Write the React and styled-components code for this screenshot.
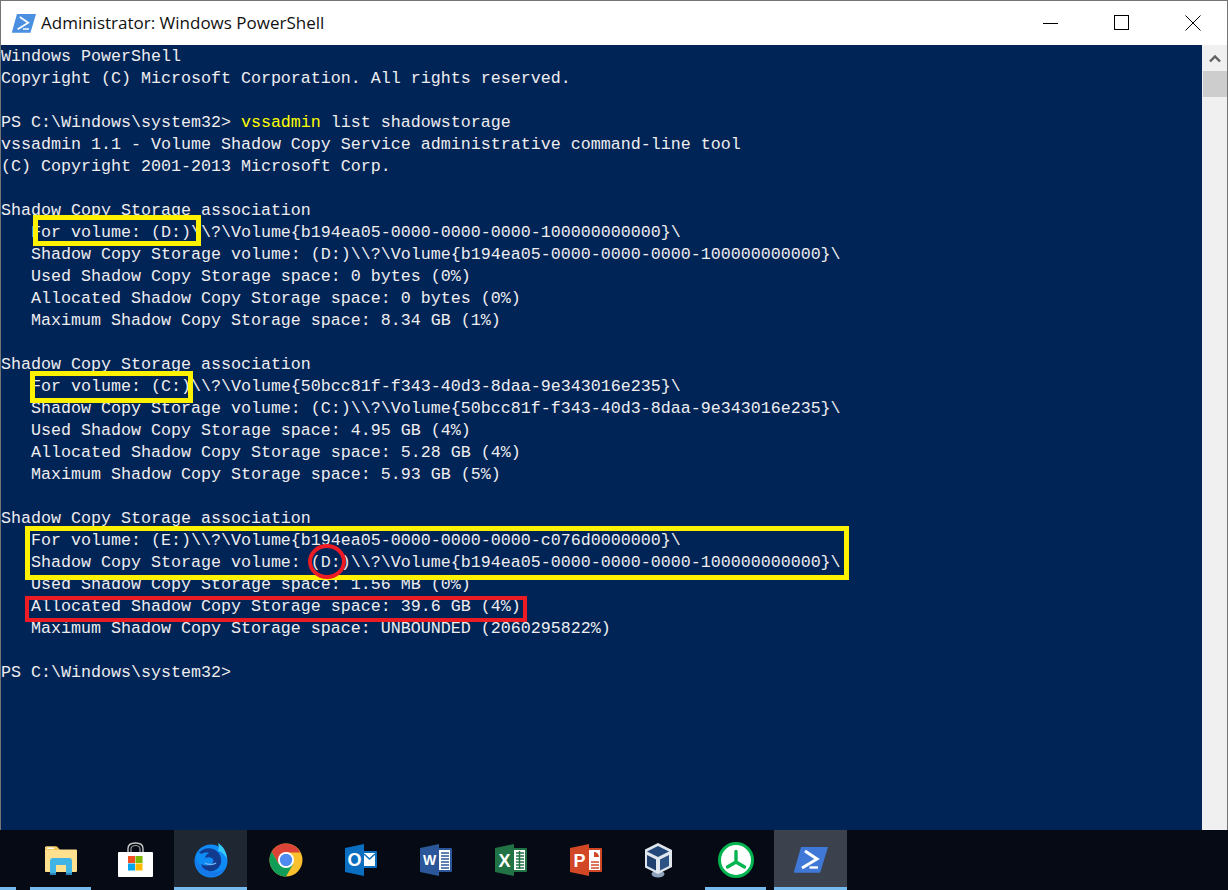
import React from 'react';
import styled, { createGlobalStyle } from 'styled-components';

const GlobalStyle = createGlobalStyle`
  html, body {
    margin: 0;
    padding: 0;
    background: #050a14;
  }
`;

const lines = [
  'Windows PowerShell',
  'Copyright (C) Microsoft Corporation. All rights reserved.',
  '',
  { prompt: 'PS C:\\Windows\\system32> ', cmd: 'vssadmin', rest: ' list shadowstorage' },
  'vssadmin 1.1 - Volume Shadow Copy Service administrative command-line tool',
  '(C) Copyright 2001-2013 Microsoft Corp.',
  '',
  'Shadow Copy Storage association',
  '   For volume: (D:)\\\\?\\Volume{b194ea05-0000-0000-0000-100000000000}\\',
  '   Shadow Copy Storage volume: (D:)\\\\?\\Volume{b194ea05-0000-0000-0000-100000000000}\\',
  '   Used Shadow Copy Storage space: 0 bytes (0%)',
  '   Allocated Shadow Copy Storage space: 0 bytes (0%)',
  '   Maximum Shadow Copy Storage space: 8.34 GB (1%)',
  '',
  'Shadow Copy Storage association',
  '   For volume: (C:)\\\\?\\Volume{50bcc81f-f343-40d3-8daa-9e343016e235}\\',
  '   Shadow Copy Storage volume: (C:)\\\\?\\Volume{50bcc81f-f343-40d3-8daa-9e343016e235}\\',
  '   Used Shadow Copy Storage space: 4.95 GB (4%)',
  '   Allocated Shadow Copy Storage space: 5.28 GB (4%)',
  '   Maximum Shadow Copy Storage space: 5.93 GB (5%)',
  '',
  'Shadow Copy Storage association',
  '   For volume: (E:)\\\\?\\Volume{b194ea05-0000-0000-0000-c076d0000000}\\',
  '   Shadow Copy Storage volume: (D:)\\\\?\\Volume{b194ea05-0000-0000-0000-100000000000}\\',
  '   Used Shadow Copy Storage space: 1.56 MB (0%)',
  '   Allocated Shadow Copy Storage space: 39.6 GB (4%)',
  '   Maximum Shadow Copy Storage space: UNBOUNDED (2060295822%)',
  '',
  'PS C:\\Windows\\system32>',
];

const marks = [
  { color: '#fff200', line: 5, x: 33, y: 170, w: 168, h: 31 },
  { color: '#fff200', line: 5, x: 30, y: 326, w: 163, h: 32 },
  { color: '#fff200', line: 5, x: 25, y: 481, w: 824, h: 54 },
  { color: '#ed1c24', line: 4, x: 25, y: 551, w: 502, h: 26 },
];

const Page = styled.div`
  width: 1228px;
  height: 890px;
  display: flex;
  flex-direction: column;
  overflow: hidden;
`;

const Window = styled.div`
  flex: 1;
  display: flex;
  flex-direction: column;
  min-height: 0;
  border: 1px solid #747474;
  border-bottom: 0;
`;

const TitleBar = styled.div`
  height: 44px;
  flex: none;
  display: flex;
  align-items: center;
  background: #fff;
`;

const TitleIcon = styled.svg`
  width: 24px;
  height: 19px;
  margin-left: 11px;
`;

const TitleText = styled.div`
  margin-left: 5px;
  font: 17px/20px "Open Sans", "Noto Sans", sans-serif;
  color: #111;
  flex: 1;
`;

const WinButton = styled.div`
  width: 71px;
  height: 44px;
  display: flex;
  align-items: center;
  justify-content: center;
`;

const WinButtons = styled.div`
  display: flex;
  margin-right: -1px;
`;

const Body = styled.div`
  flex: 1;
  display: flex;
  min-height: 0;
`;

const Console = styled.div`
  flex: 1;
  position: relative;
  padding-top: 1px;
  background: #012456;
  overflow: hidden;
`;

const Line = styled.div`
  height: 22px;
  font: 16.67px/22px "Liberation Mono", monospace;
  color: #eeedf0;
  white-space: pre;
`;

const Command = styled.span`
  color: #ffff00;
`;

const Mark = styled.div`
  position: absolute;
  box-sizing: border-box;
  border: ${(p) => p.$line}px solid ${(p) => p.$color};
`;

const Ring = styled.div`
  position: absolute;
  left: 307px;
  top: 499px;
  width: 38px;
  height: 35px;
  box-sizing: border-box;
  border: 4px solid #ed1c24;
  border-radius: 50%;
`;

const Scrollbar = styled.div`
  width: 25px;
  flex: none;
  background: #f0f0f0;
  display: flex;
  flex-direction: column;
  align-items: center;
`;

const ScrollArrow = styled.div`
  height: 26px;
  display: flex;
  align-items: center;
  justify-content: center;
  align-self: stretch;
`;

const ScrollThumb = styled.div`
  height: 26px;
  align-self: stretch;
  margin-left: 1px;
  background: #cdcdcd;
`;

const Taskbar = styled.div`
  height: 60px;
  flex: none;
  display: flex;
  gap: 2px;
  background: #050a14;
`;

const StartStub = styled.div`
  width: 16px;
  margin-right: 6px;
  position: relative;
`;

const Tile = styled.div`
  width: 73px;
  height: 60px;
  position: relative;
  display: flex;
  align-items: center;
  justify-content: center;
  background: ${(p) => p.$bg || 'transparent'};
`;

const Underline = styled.div`
  position: absolute;
  bottom: 0;
  height: 3px;
  background: #76b9ed;
  left: ${(p) => (p.$full ? 0 : '6px')};
  right: ${(p) => (p.$full ? 0 : '6px')};
`;

const Letter = styled.text`
  font-family: "Liberation Sans", sans-serif;
  font-weight: 700;
  fill: #fff;
  text-anchor: middle;
`;

const Explorer = () => (
  <svg width="32" height="32" viewBox="0 0 32 32">
    <path d="M0 3.500a1 1 0 0 1 1-1h10l3 3h17a1 1 0 0 1 1 1V27a1 1 0 0 1-1 1H1a1 1 0 0 1-1-1z" fill="#fee08e" />
    <path d="M1 2.500h11l3 3.500H0z" fill="#f3c95f" />
    <rect x="2" y="3.500" width="7" height="1.500" fill="#fff" />
    <path d="M5 31V17a3 3 0 0 1 3-3h16a3 3 0 0 1 3 3v14h-6V21H11v10z" fill="#41b4e6" />
    <rect x="5" y="29" width="6" height="2" fill="#2a86bb" />
    <rect x="21" y="29" width="6" height="2" fill="#2a86bb" />
  </svg>
);

const Store = () => (
  <svg width="36" height="36" viewBox="1 0 36 36">
    <path d="M11 11V6.500C11 3 14 1 18.500 1S26 3 26 6.500V11" fill="none" stroke="#c8c8c8" strokeWidth="1.400" />
    <path d="M14 11V7c0-2 2-3.500 4.500-3.500S23 5 23 7v4" fill="none" stroke="#9a9a9a" strokeWidth="1.200" />
    <rect x="1" y="10" width="35" height="25" rx="1" fill="#fff" />
    <rect x="11" y="14" width="7" height="7" fill="#f25022" />
    <rect x="18.500" y="14" width="7" height="7" fill="#7fba00" />
    <rect x="11" y="21.500" width="7" height="7" fill="#00a4ef" />
    <rect x="18.500" y="21.500" width="7" height="7" fill="#ffb900" />
  </svg>
);

const Firefox = () => (
  <svg width="36" height="36" viewBox="0 0 36 36">
    <circle cx="18" cy="19" r="16.500" fill="#0f8bf5" />
    <path d="M25 1c5 3 9 9 9 16-2-4-5-7-9-8 1-3 1-5 0-8z" fill="#35c9f7" />
    <path d="M4 5l2 6c3-4 9-6 14-4 6 2 9 8 8 14-2 6-7 9-12 8-4-1-7-3-8-7 4 2 8 2 10 0 2-1 3-3 2-5-2-2-6-2-8-1 0-2 2-4 4-5-3-1-6 0-8 1-2-2-3-4-4-7z" fill="#123a8f" />
    <path d="M2 15c-1 8 4 17 12 19 8 2 15-2 18-8-5 4-11 5-17 3C9 27 4 22 2 15z" fill="#1578e8" />
    <path d="M12 21c3 2 8 2 11 0" fill="none" stroke="#6fb5f5" strokeWidth="1.500" />
  </svg>
);

const Chrome = () => (
  <svg width="34" height="34" viewBox="0 0 34 34">
    <circle cx="17" cy="17" r="16.500" fill="#fbc02d" />
    <path d="M17 .5A16.500 16.500 0 0 0 2.700 8.800L9.800 21 17 9.500h14.300A16.500 16.500 0 0 0 17 .5z" fill="#db4437" />
    <path d="M2.700 8.800A16.500 16.500 0 0 0 17 33.500l7.200-12.400L17 24 9.800 21z" fill="#0f9d58" />
    <circle cx="17" cy="17" r="8" fill="#fff" />
    <circle cx="17" cy="17" r="6.200" fill="#4d8bf0" />
  </svg>
);

const Outlook = () => (
  <svg width="32" height="32" viewBox="0 0 32 32">
    <rect x="17" y="7" width="15" height="17" rx="1" fill="#0a6fc0" />
    <rect x="19" y="9" width="11" height="13" fill="#fff" />
    <path d="M19 10l5.500 5 5.500-5" fill="none" stroke="#0a6fc0" strokeWidth="1.500" />
    <path d="M0 4l19-4v32L0 28z" fill="#0a6fc0" />
    <Letter x="9.500" y="22" fontSize="18">O</Letter>
  </svg>
);

const Word = () => (
  <svg width="32" height="32" viewBox="0 0 32 32">
    <rect x="17" y="4" width="15" height="24" rx="1" fill="#2b579a" />
    <rect x="19" y="6" width="11" height="20" fill="#fff" />
    <path d="M21 9h8M21 12h8M21 15h8M21 18h8M21 21h8M21 24h8" stroke="#2b579a" strokeWidth="1.500" />
    <path d="M0 4l19-4v32L0 28z" fill="#2b579a" />
    <Letter x="9.500" y="21" fontSize="14">W</Letter>
  </svg>
);

const Excel = () => (
  <svg width="32" height="32" viewBox="0 0 32 32">
    <rect x="17" y="4" width="15" height="24" rx="1" fill="#217346" />
    <rect x="19" y="6" width="11" height="20" fill="#fff" />
    <path d="M21 9h8M21 12h8M21 15h8M21 18h8M21 21h8M21 24h8" stroke="#217346" strokeWidth="1.500" />
    <path d="M24.500 7v18" stroke="#217346" strokeWidth="1.500" />
    <path d="M0 4l19-4v32L0 28z" fill="#217346" />
    <Letter x="9.500" y="22.500" fontSize="18">X</Letter>
  </svg>
);

const Powerpoint = () => (
  <svg width="32" height="32" viewBox="0 0 32 32">
    <rect x="17" y="4" width="15" height="24" rx="1" fill="#d24726" />
    <rect x="19" y="6" width="11" height="20" fill="#fff" />
    <path d="M24 8v5h5a5 5 0 0 0-5-5z" fill="#d24726" />
    <path d="M21 18h8M21 21h8M21 24h8" stroke="#d24726" strokeWidth="1.500" />
    <path d="M0 4l19-4v32L0 28z" fill="#d24726" />
    <Letter x="9.500" y="22.500" fontSize="18">P</Letter>
  </svg>
);

const VirtualBox = () => (
  <svg width="32" height="36" viewBox="3 0 32 36">
    <ellipse cx="16" cy="32" rx="6.500" ry="3.500" fill="#8fa3bd" />
    <path d="M16 1l14 7v17l-14 7L2 25V8z" fill="#dfe6ee" />
    <path d="M16 4L5 9.500 16 15l11-5.500z" fill="#25487b" />
    <path d="M18 17.500l9-4.500v11l-9 4.500z" fill="#2f5285" />
    <path d="M5 13l9 4.500v11L5 24z" fill="#1f3f6e" />
  </svg>
);

const GreenApp = () => (
  <svg width="36" height="36" viewBox="0 0 36 36">
    <circle cx="18" cy="18" r="16.500" fill="#fff" stroke="#00b44f" strokeWidth="3" />
    <path d="M18 9.500V20M18 20l-8.500 5M18 20l8.500 5" stroke="#00b44f" strokeWidth="3.400" strokeLinecap="round" fill="none" />
  </svg>
);

const PowerShellGlyph = () => (
  <svg width="34" height="26" viewBox="0 0 34 26">
    <path d="M7 0h27l-7.700 25a1 1 0 0 1-1 .7H1a1 1 0 0 1-1-1.200z" fill="#3f78d6" />
    <path d="M11 4l12 8-15 9" fill="none" stroke="#fff" strokeWidth="3" />
    <path d="M15.500 20.500H24" stroke="#fff" strokeWidth="2.400" />
  </svg>
);

const tiles = [
  { key: 'explorer', icon: <Explorer />, line: 'short' },
  { key: 'store', icon: <Store /> },
  { key: 'firefox', icon: <Firefox />, bg: '#1f2733', line: 'full' },
  { key: 'chrome', icon: <Chrome /> },
  { key: 'outlook', icon: <Outlook /> },
  { key: 'word', icon: <Word /> },
  { key: 'excel', icon: <Excel /> },
  { key: 'ppt', icon: <Powerpoint /> },
  { key: 'vbox', icon: <VirtualBox /> },
  { key: 'green', icon: <GreenApp />, line: 'short' },
  { key: 'ps', icon: <PowerShellGlyph />, bg: '#3b424d', line: 'full' },
];

export default function App() {
  return (
    <Page>
      <GlobalStyle />
      <Window>
        <TitleBar>
          <TitleIcon viewBox="0 0 34 26" preserveAspectRatio="none">
            <path d="M7 0h27l-7.700 25a1 1 0 0 1-1 .7H1a1 1 0 0 1-1-1.200z" fill="#4a8fe0" />
            <path d="M11 4l12 8-15 9" fill="none" stroke="#fff" strokeWidth="2.400" />
            <path d="M15.500 20.500H24" stroke="#fff" strokeWidth="2" />
          </TitleIcon>
          <TitleText>Administrator: Windows PowerShell</TitleText>
          <WinButtons>
            <WinButton>
              <svg width="16" height="16" viewBox="0 0 16 16"><path d="M0 8.500h15" stroke="#000" strokeWidth="1" /></svg>
            </WinButton>
            <WinButton>
              <svg width="16" height="16" viewBox="0 0 16 16"><rect x="0.500" y="0.500" width="14" height="14" fill="none" stroke="#000" /></svg>
            </WinButton>
            <WinButton>
              <svg width="16" height="16" viewBox="0 0 16 16"><path d="M0.500 0.500l15 15M15.500 0.500l-15 15" stroke="#000" /></svg>
            </WinButton>
          </WinButtons>
        </TitleBar>
        <Body>
          <Console>
            {lines.map((l, i) => (
              <Line key={i}>
                {typeof l === 'string' ? l : (
                  <>
                    {l.prompt}
                    <Command>{l.cmd}</Command>
                    {l.rest}
                  </>
                )}
              </Line>
            ))}
            {marks.map((m, i) => (
              <Mark key={i} $color={m.color} $line={m.line} style={{ left: m.x - 1, top: m.y, width: m.w, height: m.h }} />
            ))}
            <Ring />
          </Console>
          <Scrollbar>
            <ScrollArrow>
              <svg width="12" height="9" viewBox="0 0 12 9"><path d="M1 7.500l5-5 5 5" fill="none" stroke="#606060" strokeWidth="2.400" /></svg>
            </ScrollArrow>
            <ScrollThumb />
          </Scrollbar>
        </Body>
      </Window>
      <Taskbar>
        <StartStub><Underline $full /></StartStub>
        {tiles.map((t) => (
          <Tile key={t.key} $bg={t.bg}>
            {t.icon}
            {t.line && <Underline $full={t.line === 'full'} />}
          </Tile>
        ))}
      </Taskbar>
    </Page>
  );
}
